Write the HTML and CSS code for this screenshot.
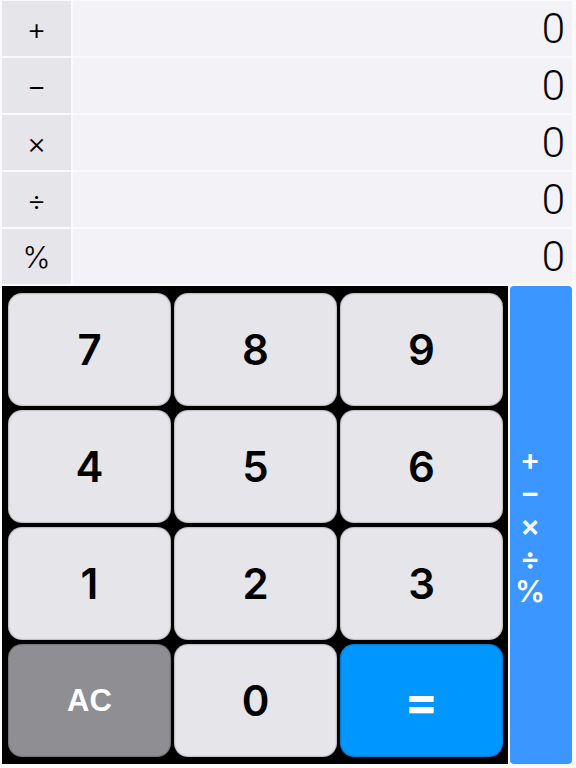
FILE: index.html
```html
<!DOCTYPE html>
<html lang="en">
<head>
  <meta charset="UTF-8">
  <meta name="viewport" content="width=device-width, initial-scale=1.0">
  <title>Calculator</title>
  <link rel="stylesheet" href="styles.css">
</head>
<body>

  <div class="results">
    <div class="row"><div class="op">+</div><div class="value">0</div></div>
    <div class="row"><div class="op">−</div><div class="value">0</div></div>
    <div class="row"><div class="op">×</div><div class="value">0</div></div>
    <div class="row"><div class="op">÷</div><div class="value">0</div></div>
    <div class="row"><div class="op">%</div><div class="value">0</div></div>
  </div>

  <div class="pad">
    <div class="keys">
      <div class="key">7</div>
      <div class="key">8</div>
      <div class="key">9</div>
      <div class="key">4</div>
      <div class="key">5</div>
      <div class="key">6</div>
      <div class="key">1</div>
      <div class="key">2</div>
      <div class="key">3</div>
      <div class="key clear">AC</div>
      <div class="key">0</div>
      <div class="key equals">=</div>
    </div>
    <div class="all-ops">
      <span>+</span>
      <span>−</span>
      <span>×</span>
      <span>÷</span>
      <span>%</span>
    </div>
  </div>

</body>
</html>
```
FILE: styles.css
```css
body { margin: 0; background: #fafafa; font-family: Inter, "Liberation Sans", sans-serif; color: #000; }

.results { display: flex; flex-direction: column; gap: 2px; padding: 1px 4px 0 2px; }
.row { display: flex; gap: 2px; height: 55px; }
.op { width: 69px; background: #e5e5ea; display: flex; align-items: center; justify-content: center; font-size: 30px; font-weight: 300; }
.value { flex: 1; background: #f2f2f7; display: flex; align-items: center; justify-content: flex-end; padding-right: 7px; font-family: Roboto, sans-serif; font-weight: 300; font-size: 42px; }

.pad { display: flex; gap: 2px; margin: 2px 4px 0 2px; height: 478px; }
.keys { flex: 1; background: #000; padding: 7px 5px 7px 6px; display: grid; grid-template-columns: repeat(3, 1fr); grid-template-rows: repeat(4, 1fr); gap: 4px 3px; }
.key { background: #e5e5ea; border-radius: 14px; display: flex; align-items: center; justify-content: center; font-size: 42px; font-weight: 600; box-shadow: inset 0 0 2px rgba(0,0,0,0.6); }
.key.clear { background: #8e8e93; color: #fff; font-family: "Liberation Sans", sans-serif; font-weight: bold; font-size: 31px; }
.key.equals { background: #0096ff; color: #fff; font-weight: bold; font-size: 50px; }

.all-ops { width: 62px; background: #3b97ff; border-radius: 4px; display: flex; flex-direction: column; align-items: center; justify-content: center; padding-right: 22px; box-sizing: border-box; color: #fff; font-size: 30px; font-weight: 600; line-height: 33px; }
```
